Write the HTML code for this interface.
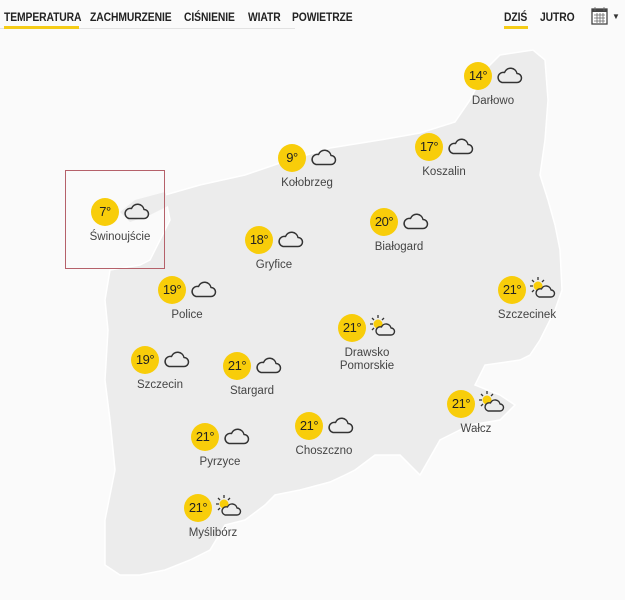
<!DOCTYPE html>
<html><head><meta charset="utf-8">
<style>
*{margin:0;padding:0;box-sizing:border-box}
body{width:625px;height:600px;background:#fafafa;font-family:"Liberation Sans",sans-serif;position:relative;overflow:hidden;color:#333}
.nav{position:absolute;top:10px;font-size:12px;font-weight:bold;color:#222;transform:scaleX(.86);transform-origin:left;white-space:nowrap;letter-spacing:-.1px}
.ul{position:absolute;height:3px;background:#f5cc17;top:26px}
.c{position:absolute;width:28px;height:28px;border-radius:50%;background:#f8cd0a;font-size:13px;color:#222;text-align:center;line-height:28px;letter-spacing:-.5px}
.l{position:absolute;font-size:11.5px;color:#444;text-align:center;width:120px;line-height:13px}
.i{position:absolute}
</style></head><body>
<div class="nav" style="left:4px">TEMPERATURA</div>
<div class="nav" style="left:90px">ZACHMURZENIE</div>
<div class="nav" style="left:184px">CIŚNIENIE</div>
<div class="nav" style="left:248px">WIATR</div>
<div class="nav" style="left:292px">POWIETRZE</div>
<div class="nav" style="left:504px">DZIŚ</div>
<div class="nav" style="left:540px">JUTRO</div>
<div style="position:absolute;left:0;top:28px;width:295px;height:1px;background:#e2e2e2"></div>
<div class="ul" style="left:4px;width:75px"></div>
<div class="ul" style="left:504px;width:24px"></div>
<svg class="i" style="left:590px;top:6px" width="20" height="20" viewBox="0 0 20 20"><rect x="2" y="3" width="15" height="15" fill="#fff" stroke="#444" stroke-width="1.3"/><rect x="2" y="3" width="15" height="3" fill="#444"/><path d="M5 1v4M14 1v4M4 9h11M4 12h11M4 15h11M7 7v10M10 7v10M13 7v10" stroke="#666" stroke-width=".8"/></svg>
<div style="position:absolute;left:612px;top:12px;font-size:8px;color:#333">▼</div>

<svg class="i" style="left:0;top:0" width="625" height="600">
<polygon fill="#ececec" stroke="#fff" stroke-width="1.5" points="165,195 200,185 245,175 280,163 330,148 380,140 420,133 455,122 470,100 485,70 500,55 533,50 545,60 548,100 545,140 540,175 548,200 555,225 560,250 562,290 555,310 540,340 530,355 520,360 485,365 475,385 500,395 515,405 500,420 470,425 440,440 420,475 400,455 375,455 355,470 345,475 330,482 300,490 275,495 265,505 245,520 225,525 210,550 190,560 165,570 140,575 120,575 105,565 105,520 115,470 110,420 105,380 108,330 105,300 110,270 140,265 150,260 160,240 170,220"/>
<polygon fill="#ececec" points="120,212 135,200 165,192 170,205 150,215 130,222"/>
<rect x="65.5" y="170.5" width="99" height="98" fill="none" stroke="#b5616a" stroke-width="1"/>
</svg>

<div id="m"></div>
<script>
var cloud='<svg width="28" height="20" viewBox="0 0 28 20"><path d="M7 17.5h15a4.5 4.5 0 0 0 0-9 6.5 6.5 0 0 0-12.5-1A5 5 0 0 0 7 17.5z" fill="none" stroke="#333" stroke-width="1.5" stroke-linejoin="round"/></svg>';
var sun='<svg width="30" height="24" viewBox="0 0 30 24"><circle cx="11" cy="10" r="4.5" fill="#f8cd0a"/><path d="M11 1v3M3 10h3M5 4l2 2M17 4l-2 2M5 16l2-2" stroke="#333" stroke-width="1.3"/><path d="M12 21h12a3.5 3.5 0 0 0 0-7 5 5 0 0 0-9.5-1A4 4 0 0 0 12 21z" fill="#ececec" stroke="#333" stroke-width="1.4" stroke-linejoin="round"/></svg>';
var d=[[478,76,"14°","Darłowo",0],[292,158,"9°","Kołobrzeg",0],[429,147,"17°","Koszalin",0],[105,212,"7°","Świnoujście",0],[259,240,"18°","Gryfice",0],[384,222,"20°","Białogard",0],[172,290,"19°","Police",0],[512,290,"21°","Szczecinek",1],[352,328,"21°","Drawsko<br>Pomorskie",1],[145,360,"19°","Szczecin",0],[237,366,"21°","Stargard",0],[461,404,"21°","Wałcz",1],[309,426,"21°","Choszczno",0],[205,437,"21°","Pyrzyce",0],[198,508,"21°","Myślibórz",1]];
var h='';
d.forEach(function(a){var x=a[0],y=a[1];
h+='<div class="c" style="left:'+(x-14)+'px;top:'+(y-14)+'px">'+a[2]+'</div>';
h+=a[4]?'<div class="i" style="left:'+(x+15)+'px;top:'+(y-14)+'px">'+sun+'</div>':'<div class="i" style="left:'+(x+17)+'px;top:'+(y-11)+'px">'+cloud+'</div>';
h+='<div class="l" style="left:'+(x+15-60)+'px;top:'+(y+19)+'px">'+a[3]+'</div>';});
document.getElementById('m').innerHTML=h;
</script>
</body></html>
